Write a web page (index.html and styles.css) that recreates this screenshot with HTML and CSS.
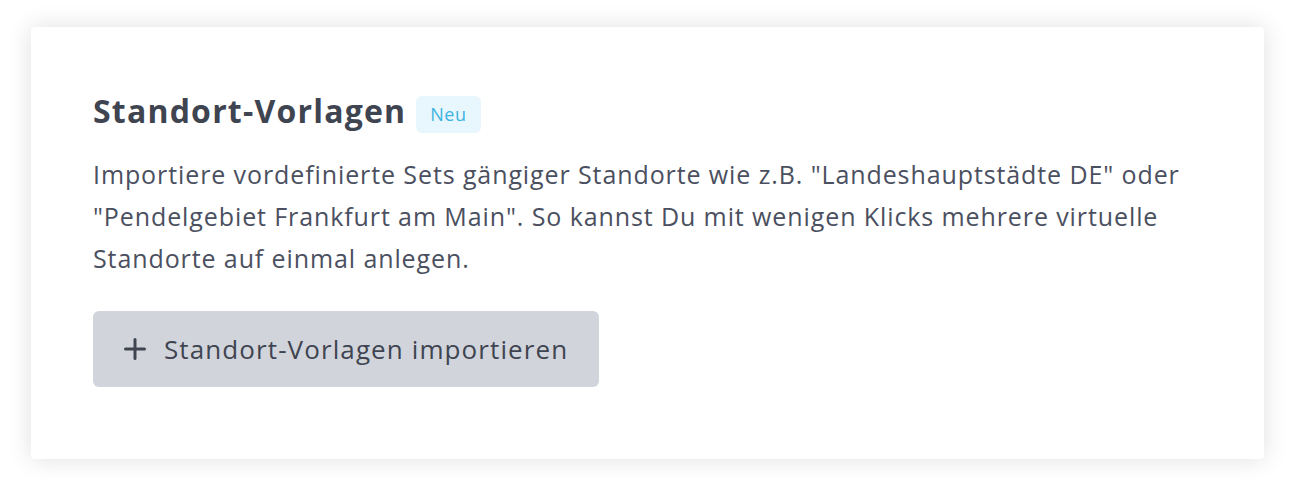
FILE: index.html
```html
<!DOCTYPE html>
<html lang="de">
<head>
<meta charset="UTF-8">
<meta name="viewport" content="width=device-width, initial-scale=1.0">
<title>Standort-Vorlagen</title>
<link rel="stylesheet" href="styles.css">
</head>
<body>

<div class="page">
    <div class="card">
        <h2 class="card-title">Standort-Vorlagen <span class="badge">Neu</span></h2>
        <p class="card-text">Importiere vordefinierte Sets gängiger Standorte wie z.B. "Landeshauptstädte DE" oder "Pendelgebiet Frankfurt am Main". So kannst Du mit wenigen Klicks mehrere virtuelle Standorte auf einmal anlegen.</p>
        <button class="btn" type="button">
            <svg class="btn-icon" width="22" height="22" viewBox="0 0 22 22" aria-hidden="true">
                <path d="M11 1.5v19M1.5 11h19" stroke="currentColor" stroke-width="3" stroke-linecap="round" fill="none"/>
            </svg>
            Standort-Vorlagen importieren
        </button>
    </div>
</div>

</body>
</html>
```

FILE: styles.css
```css
body {
    margin: 0;
    font-family: "Open Sans", "Noto Sans", sans-serif;
    background-color: #fff;
    color: #374151;
}

.page {
    padding: 27px 31px 35px;
}

.card {
    background-color: #fff;
    border-radius: 4px;
    box-shadow: 0 0 24px rgba(0, 0, 0, 0.13);
    padding: 60px 62px 72px;
}

.card-title {
    margin: 0;
    font-size: 32px;
    line-height: 48px;
    font-weight: 700;
    letter-spacing: 1.2px;
    color: #3f4451;
    display: flex;
    align-items: center;
    gap: 10px;
}

.badge {
    display: inline-block;
    margin-top: 7px;
    font-size: 18px;
    font-weight: 400;
    letter-spacing: 0.5px;
    line-height: 37px;
    padding: 0 14px;
    border-radius: 6px;
    background-color: #e8f6fd;
    color: #3cb4e0;
}

.card-text {
    margin: 18px 0 32px;
    font-size: 25px;
    line-height: 42px;
    letter-spacing: 0.9px;
    color: #4b5060;
}

.btn {
    display: inline-flex;
    align-items: center;
    gap: 18px;
    height: 76px;
    padding: 0 31px;
    font-family: inherit;
    font-size: 26px;
    letter-spacing: 1.1px;
    color: #3f4451;
    background-color: #d1d5db;
    border: none;
    border-radius: 6px;
    cursor: pointer;
}

.btn-icon {
    flex: none;
}
```
